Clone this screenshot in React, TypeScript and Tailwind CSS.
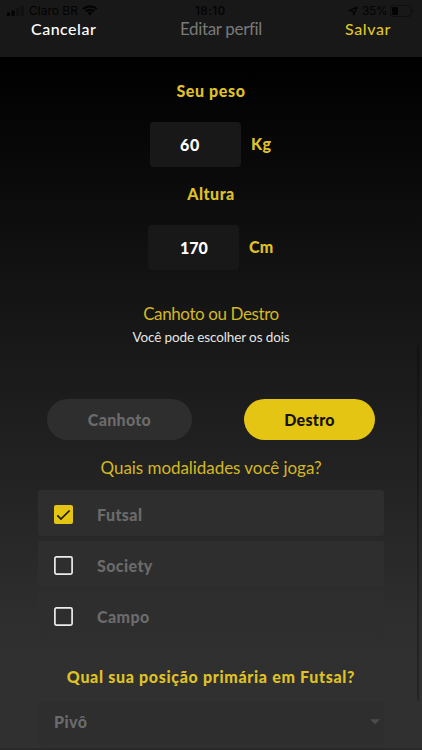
import { useState } from 'react'
import type { ReactNode } from 'react'

const modalities = ['Futsal', 'Society', 'Campo']

export default function App() {
  const [foot, setFoot] = useState('Destro')
  const [selected, setSelected] = useState<string[]>(['Futsal'])

  return (
    <div className="relative h-[750px] w-[422px] overflow-hidden bg-black font-['Lato',sans-serif]">
      <Header />
      <main className="h-[693px] bg-[linear-gradient(to_bottom,#000000_0px,#0a0a0a_120px,#141414_235px,#1c1c1c_335px,#232323_425px,#2e2e2e_560px,#303030_620px)] pt-[22px]">
        <Title className="tracking-[0.6px]">Seu peso</Title>
        <Measure value="60" unit="Kg" className="mt-[19px] ml-[150px]" valueClass="pl-[30px] tracking-[0.8px]" />
        <Title className="mt-[15px] tracking-[0.5px]">Altura</Title>
        <Measure value="170" unit="Cm" className="mt-[19px] ml-[148px]" valueClass="pl-[32px]" />
        <h2 className="mt-[32px] text-center text-[17px] leading-[24px] tracking-[-0.4px] text-[#d3b822]">
          Canhoto ou Destro
        </h2>
        <p className="text-center text-[13.5px] leading-[22px] tracking-[-0.12px] text-[#e6e6e6]">
          Você pode escolher os dois
        </p>
        <div className="mt-[51px] flex h-[41px] pl-[47px]">
          <FootButton
            label="Canhoto"
            active={foot === 'Canhoto'}
            className="w-[145px]"
            onClick={() => setFoot('Canhoto')}
          />
          <FootButton
            label="Destro"
            active={foot === 'Destro'}
            className="ml-[52px] w-[131px]"
            onClick={() => setFoot('Destro')}
          />
        </div>
        <h2 className="mt-[16px] text-center text-[17px] leading-[24px] tracking-[-0.05px] text-[#d3b822]">
          Quais modalidades você joga?
        </h2>
        <div className="mt-[10px] ml-[38px] flex w-[346px] flex-col gap-[5px]">
          {modalities.map((name) => {
            const checked = selected.includes(name)
            return (
              <button
                key={name}
                type="button"
                className="flex h-[46px] items-center rounded-[3px] bg-[#2e2e2e] pt-[3px] pl-[16px] text-left"
                onClick={() =>
                  setSelected(checked ? selected.filter((item) => item !== name) : [...selected, name])
                }
              >
                <Checkbox checked={checked} />
                <span className="ml-[24px] text-[16px] leading-[20px] font-black tracking-[0.4px] text-[#6b6b6b]">
                  {name}
                </span>
              </button>
            )
          })}
        </div>
        <Title className="mt-[27px] tracking-[0.67px]">Qual sua posição primária em Futsal?</Title>
        <div className="mt-[13px] ml-[38px] flex h-[43px] w-[346px] items-center justify-between rounded-[3px] bg-[#2e2e2e] pr-[4px] pb-[3px] pl-[16px]">
          <span className="text-[16px] leading-[20px] font-black tracking-[0.4px] text-[#6b6b6b]">Pivô</span>
          <svg width="10" height="6" viewBox="0 0 10 6" fill="#4b4b4b">
            <path d="M0 .3h10L5 5.3z" />
          </svg>
        </div>
      </main>
      <div className="absolute top-[345px] right-[3px] h-[356px] w-[2px] rounded-full bg-black/25" />
      <div className="absolute bottom-0 h-[2px] w-full bg-[#292929]" />
    </div>
  )
}

function Header() {
  return (
    <header className="h-[57px] bg-[#181818]">
      <div className="flex h-[22px] items-center pl-[7px] font-['Inter',sans-serif] text-[12px] text-[#030303]">
        <svg width="17" height="10" viewBox="0 0 17 10" fill="currentColor">
          <rect x="0" y="6.5" width="3" height="3.5" rx=".6" />
          <rect x="4.6" y="4.6" width="3" height="5.4" rx=".6" />
          <rect x="9.2" y="2.4" width="3" height="7.6" rx=".6" opacity=".35" />
          <rect x="13.8" y="0" width="3" height="10" rx=".6" opacity=".35" />
        </svg>
        <span className="ml-[5px] w-[53px] whitespace-nowrap">Claro BR</span>
        <svg width="16" height="12" viewBox="0 0 16 12" fill="currentColor">
          <path d="M8 2.4c2.2 0 4.2.9 5.7 2.3.1.1.3.1.4 0l1.1-1.1c.1-.1.1-.3 0-.5a10.4 10.4 0 0 0-14.4 0c-.1.1-.1.3 0 .5l1.1 1.1c.1.1.3.1.4 0A8.3 8.3 0 0 1 8 2.4z" />
          <path d="M8 5.9c1.2 0 2.3.4 3.2 1.2.1.1.3.1.4 0l1.1-1.1c.1-.1.1-.3 0-.5a6.9 6.9 0 0 0-9.4 0c-.1.1-.1.3 0 .5l1.1 1.1c.1.1.3.1.4 0A4.8 4.8 0 0 1 8 5.9z" />
          <path d="M10.2 8.2c.1-.1.1-.3 0-.4a3.4 3.4 0 0 0-4.4 0c-.1.1-.1.3 0 .4l1.9 2c.2.2.4.2.6 0z" />
        </svg>
        <span className="ml-[97px] w-[153px] font-medium tracking-[0.35px]">18:10</span>
        <svg width="10" height="10" viewBox="0 0 10 10" fill="none" stroke="currentColor" strokeWidth="1.2" strokeLinejoin="round">
          <path d="M9 1 5.6 9 5 5.2 1 4.7z" />
        </svg>
        <span className="ml-[4px] w-[28px] tracking-[-0.4px]">35%</span>
        <svg width="24" height="12" viewBox="0 0 24 12">
          <rect x=".5" y=".5" width="20.5" height="11" rx="2.8" fill="none" stroke="currentColor" strokeOpacity=".4" />
          <rect x="2" y="2" width="6" height="8" rx="1.3" fill="currentColor" />
          <path d="M22.3 4v4c.9-.4 1.3-1.100 1.300-2s-.4-1.600-1.300-2z" fill="currentColor" fillOpacity=".4" />
        </svg>
      </div>
      <nav className="-mt-px flex h-[15px] items-center pl-[31px] text-[16px] leading-[15px]">
        <span className="w-[149px] font-medium tracking-[0.5px] text-white">Cancelar</span>
        <span className="w-[165px] text-[17px] tracking-[-0.35px] text-[#797979]">Editar perfil</span>
        <span className="font-medium tracking-[0.6px] text-[#dfc527]">Salvar</span>
      </nav>
    </header>
  )
}

function Title({ className, children }: { className: string; children: ReactNode }) {
  return (
    <h2 className={`text-center text-[16px] leading-[24px] font-black whitespace-nowrap text-[#dfc127] ${className}`}>
      {children}
    </h2>
  )
}

function Measure({
  value,
  unit,
  className,
  valueClass,
}: {
  value: string
  unit: string
  className: string
  valueClass: string
}) {
  return (
    <div className={`flex h-[45px] items-center ${className}`}>
      <input
        readOnly
        value={value}
        className={`h-full w-[91px] rounded-[4px] bg-[#181818] pb-[1px] text-[16px] font-black text-white outline-none ${valueClass}`}
      />
      <span className="ml-[10px] pb-[2px] text-[16px] leading-[20px] font-black tracking-[0.3px] text-[#dfc127]">
        {unit}
      </span>
    </div>
  )
}

function FootButton({
  label,
  active,
  className,
  onClick,
}: {
  label: string
  active: boolean
  className: string
  onClick: () => void
}) {
  return (
    <button
      type="button"
      onClick={onClick}
      className={`rounded-full text-[16px] font-black tracking-[0.3px] ${
        active ? 'bg-[#e4c514] text-[#151208]' : 'bg-[#2e2e2e] text-[#6b6b6b]'
      } ${className}`}
    >
      {label}
    </button>
  )
}

function Checkbox({ checked }: { checked: boolean }) {
  return (
    <svg width="19" height="19" viewBox="0 0 19 19" fill="none">
      {checked ? (
        <>
          <rect width="19" height="19" rx="2" fill="#e4c514" />
          <path d="m3.4 10.4 3.5 3.6 8.7-8.5" stroke="#1b180b" strokeWidth="1.7" />
        </>
      ) : (
        <rect x=".9" y=".9" width="17.2" height="17.2" rx="1.5" stroke="#ececec" strokeWidth="1.7" />
      )}
    </svg>
  )
}
